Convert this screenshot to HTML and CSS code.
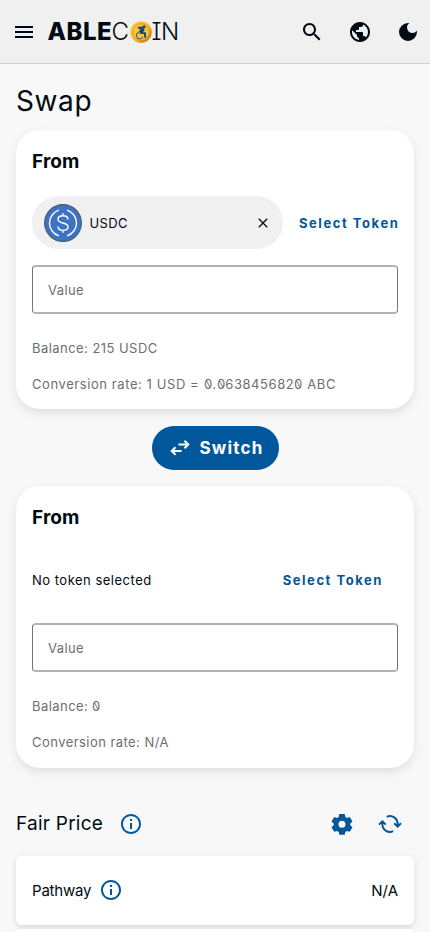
FILE: index.html
```html
<!DOCTYPE html>
<html lang="en">
<head>
<meta charset="utf-8">
<meta name="viewport" content="width=device-width, initial-scale=1">
<title>Ablecoin</title>
<link rel="stylesheet" href="styles.css">
</head>
<body>
<header class="topbar">
  <svg class="icon" viewBox="0 0 24 24"><path d="M3 18h18v-2H3v2zm0-5h18v-2H3v2zm0-7v2h18V6H3z"/></svg>
  <div class="logo"><span class="able">ABLE</span><span class="thin">C</span><svg class="coin" viewBox="0 0 22 22">
    <defs><linearGradient id="gold" x1="0" y1="0" x2="1" y2="1"><stop offset="0" stop-color="#ffd94f"/><stop offset=".55" stop-color="#f6b92c"/><stop offset="1" stop-color="#a9610f"/></linearGradient></defs>
    <circle cx="11" cy="11" r="10.8" fill="url(#gold)"/>
    <circle cx="11" cy="11" r="8.4" fill="#f8c342" stroke="#e08f18" stroke-width=".9"/>
    <circle cx="14" cy="5.8" r="1.5" fill="#15446f"/>
    <path d="M7.8 6.9l3.8-.3 2 2.3-2.4 3 3.8.2.2 4.6M12.5 8l-3 3.2M11.5 8.3l-1.8 2.5" fill="none" stroke="#15446f" stroke-width="1.9"/>
    <path d="M9 11.3a3.3 3.3 0 1 0 3.8 4.3" fill="none" stroke="#3d6670" stroke-width="1.2"/>
  </svg><span class="thin last"><span class="bar-i">I</span>N</span></div>
  <div class="actions">
    <svg class="icon" viewBox="0 0 24 24"><path d="M15.5 14h-.79l-.28-.27C15.41 12.59 16 11.11 16 9.5 16 5.91 13.09 3 9.5 3S3 5.91 3 9.5 5.91 16 9.5 16c1.61 0 3.09-.59 4.23-1.57l.27.28v.79l5 4.99L20.49 19l-4.99-5zm-6 0C7.01 14 5 11.99 5 9.5S7.01 5 9.5 5 14 7.01 14 9.5 11.99 14 9.5 14z"/></svg>
    <svg class="icon" viewBox="0 0 24 24"><path d="M12 2C6.48 2 2 6.48 2 12s4.48 10 10 10 10-4.48 10-10S17.52 2 12 2zm-1 17.93c-3.95-.49-7-3.85-7-7.93 0-.62.08-1.21.21-1.79L9 15v1c0 1.1.9 2 2 2v1.93zm6.9-2.54c-.26-.81-1-1.39-1.9-1.39h-1v-3c0-.55-.45-1-1-1H8v-2h2c.55 0 1-.45 1-1V7h2c1.1 0 2-.9 2-2v-.41c2.93 1.19 5 4.06 5 7.41 0 2.08-.8 3.97-2.1 5.39z"/></svg>
    <svg class="icon" viewBox="0 0 24 24"><path d="M12 3a9 9 0 1 0 9 9c0-.46-.04-.92-.1-1.36a5.389 5.389 0 0 1-4.4 2.26 5.403 5.403 0 0 1-3.14-9.8c-.44-.06-.9-.1-1.36-.1z"/></svg>
  </div>
</header>
<main>
  <h1 class="title"><span>Swap</span></h1>
  <section class="card first">
    <h2>From</h2>
    <div class="token-row">
      <div class="chip">
        <svg class="usdc" viewBox="0 0 38 38"><circle cx="19" cy="19" r="18.4" fill="#3e73c4" stroke="#48606f" stroke-width="1.1"/><g fill="none" stroke="#fff" stroke-width="1.4"><path d="M15 6.1a13.5 13.5 0 0 0 0 25.8M23 6.1a13.5 13.5 0 0 1 0 25.8"/><path d="M24 15.4c0-2.3-2-3.7-5-3.7s-5 1.3-5 3.5c0 5 10 2.5 10 7.6 0 2.2-2 3.6-5 3.6s-5-1.4-5-3.8M19 9.3v2.4M19 26.4v2.4"/></g></svg>
        <span class="name">USDC</span>
        <svg class="close" viewBox="0 0 10 10"><path d="M.8.8l8.4 8.4M9.2.8L.8 9.2"/></svg>
      </div>
      <span class="select">Select Token</span>
    </div>
    <div class="field">Value</div>
    <p class="balance">Balance: 215 USDC</p>
    <p class="rate long">Conversion rate: 1 USD = <span class="zero">0</span>.<span class="zero">0</span>63845682<span class="zero">0</span> ABC</p>
  </section>
  <div class="switch"><svg viewBox="0 0 20 16"><path d="M8.5 4.5h9.5M14.5.8L18.3 4.5l-3.8 3.7M11.5 11H2M5.5 7.3L1.7 11l3.8 3.7"/></svg><span>Switch</span></div>
  <section class="card second">
    <h2>From</h2>
    <div class="token-row">
      <span class="none">No token selected</span>
      <span class="select">Select Token</span>
    </div>
    <div class="field">Value</div>
    <p class="balance">Balance: <span class="zero">0</span></p>
    <p class="rate">Conversion rate: N/A</p>
  </section>
  <div class="price-head">
    <h3>Fair Price</h3>
    <svg class="icon blue" viewBox="0 0 24 24"><path d="M11 7h2v2h-2zm0 4h2v6h-2zm1-9C6.48 2 2 6.48 2 12s4.48 10 10 10 10-4.48 10-10S17.52 2 12 2zm0 18c-4.41 0-8-3.59-8-8s3.59-8 8-8 8 3.59 8 8-3.59 8-8 8z"/></svg>
    <div class="tools">
      <svg class="icon blue" viewBox="0 0 24 24"><path fill-rule="evenodd" d="M9.3 2h5.4l.6 2.9 1.7 1 2.8-1 2.7 4.6-2.2 1.9v1.9l2.2 1.9-2.7 4.6-2.8-.9-1.7 1-.6 2.9H9.3l-.6-2.9-1.7-1-2.8.9-2.7-4.6 2.2-1.9v-1.9L1.5 9.5l2.7-4.6 2.8 1 1.7-1zM12 8.7a3.5 3.5 0 1 0 0 7 3.5 3.5 0 0 0 0-7z"/></svg>
      <svg class="icon refresh" viewBox="0 0 24 24"><path d="M8.8 4.8A7.6 7.6 0 0 1 19.6 12v1.4M15.2 19.2A7.6 7.6 0 0 1 4.4 12v-1.4M16.2 11.3l3.4 3.3 3.4-3.3M1 12.6l3.4-3.3 3.4 3.3"/></svg>
    </div>
  </div>
  <div class="row"><span class="path">Pathway</span><svg class="icon blue" viewBox="0 0 24 24"><path d="M11 7h2v2h-2zm0 4h2v6h-2zm1-9C6.48 2 2 6.48 2 12s4.48 10 10 10 10-4.48 10-10S17.52 2 12 2zm0 18c-4.41 0-8-3.59-8-8s3.59-8 8-8 8 3.59 8 8-3.59 8-8 8z"/></svg><span class="na">N/A</span></div>
  <div class="row next"></div>
</main>
</body>
</html>
```
FILE: styles.css
```css
* { box-sizing: border-box; margin: 0; padding: 0; }
body {
  height: 932px;
  overflow: hidden;
  background: #f8f8f8;
  color: #000a12;
  font-family: Inter, "Liberation Sans", sans-serif;
  font-size: 13px;
  white-space: nowrap;
}
svg { display: block; flex: none; }
.icon { width: 24px; height: 24px; fill: #000a12; }
.blue { fill: #01579b; }
.topbar {
  display: flex;
  align-items: center;
  height: 64px;
  padding: 0 10px 0 12px;
  background: #f0f0f0;
  border-bottom: 1px solid #d0d0d0;
}
.logo {
  display: flex;
  align-items: center;
  height: 24px;
  margin-left: 11.5px;
  font-size: 24px;
  line-height: 24px;
}
.able { width: 64px; font-weight: 800; letter-spacing: .5px; }
.thin { width: 18px; font-weight: 350; letter-spacing: -.5px; }
.last { width: auto; }
.bar-i { font-feature-settings: "cv08", "ss02"; }
.coin { width: 22px; height: 22px; }
.actions { display: flex; gap: 24px; margin-left: auto; }
.title {
  height: 66px;
  padding: 20px 16px 0;
  font-size: 28px;
  font-weight: 400;
  line-height: 34px;
  letter-spacing: .6px;
}
.card {
  margin: 0 16px;
  padding: 20px 16px 0;
  border-radius: 24px;
  background: #fff;
  box-shadow: 0 4px 10px rgba(0, 0, 0, .1);
}
.card.first { height: 279.25px; }
.card.second { height: 282px; }
h2 { height: 24px; font-size: 19px; font-weight: 700; line-height: 24px; letter-spacing: .1px; }
.token-row { display: flex; align-items: center; height: 53px; margin-top: 22px; }
.chip {
  display: flex;
  flex: none;
  align-items: center;
  width: 251px;
  height: 53px;
  padding: 0 15px 0 12px;
  border-radius: 27px;
  background: #f0f0f0;
}
.usdc { width: 38px; height: 38px; }
.name { margin-left: 7.5px; letter-spacing: .4px; }
.close { width: 10px; height: 10px; margin-left: auto; fill: none; stroke: #000a12; stroke-width: 1.3; }
.select { margin-left: 16px; color: #01579b; font-weight: 700; letter-spacing: 1.55px; }
.second .select { margin-left: auto; margin-right: 15px; }
.second .token-row { margin-top: 23px; }
.field {
  height: 49px;
  margin-top: 16px;
  padding-left: 15px;
  border: 1px solid #73757a;
  border-top: 2px solid #b3b3b3;
  border-bottom: 2px solid #b3b3b3;
  border-radius: 4px;
  color: #6c6f73;
  line-height: 46px;
  letter-spacing: .4px;
}
.second .field { margin-top: 17px; }
p { height: 20px; color: #6c6f73; line-height: 20px; letter-spacing: .45px; }
.balance { margin-top: 24px; }
.rate { margin-top: 16px; }
.long { letter-spacing: .58px; }
.zero { display: inline-block; transform: scaleX(-1); font-feature-settings: "zero"; letter-spacing: 0; margin-right: .5px; }
.none { letter-spacing: .5px; }
.switch {
  display: flex;
  align-items: center;
  width: 127px;
  height: 44px;
  margin: 16.25px auto 16.5px;
  padding-left: 18px;
  border-radius: 22px;
  background: #01579b;
  color: #fff;
  font-size: 17px;
  font-weight: 700;
  letter-spacing: 1.2px;
}
.switch svg { width: 20px; height: 16px; margin-right: 10px; fill: none; stroke: #fff; stroke-width: 2; }
.price-head { display: flex; align-items: center; height: 24px; margin: 43.5px 28px 0 16px; }
h3 { width: 103px; font-size: 19px; font-weight: 400; line-height: 24px; letter-spacing: .25px; }
.tools { display: flex; gap: 24px; margin-left: auto; }
.refresh { fill: none; stroke: #01579b; stroke-width: 2; }
.row {
  display: flex;
  align-items: center;
  height: 69.5px;
  margin: 20px 16px 0;
  padding: 0 16px;
  border-radius: 6px;
  background: #fff;
  font-size: 15px;
  box-shadow: 0 2px 6px rgba(0, 0, 0, .12);
}
.row.next { height: 2.5px; margin-top: 4px; border-radius: 6px 6px 0 0; }
.path { width: 67px; letter-spacing: -.2px; }
.na { margin-left: auto; }
```
